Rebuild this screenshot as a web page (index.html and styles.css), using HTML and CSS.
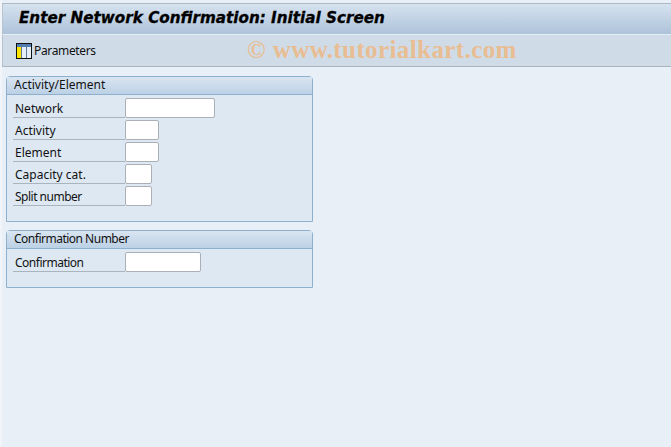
FILE: index.html
```html
<!DOCTYPE html>
<html lang="en">
<head>
<meta charset="UTF-8">
<title>Enter Network Confirmation: Initial Screen</title>
<link rel="stylesheet" href="styles.css">
</head>
<body>
<div class="window">
  <h1 class="title">Enter Network Confirmation: Initial Screen</h1>
  <div class="toolbar">
    <button class="tool" type="button">
      <svg class="tool-icon" width="16" height="16" viewBox="0 0 16 16">
        <rect x="0.5" y="0.5" width="15" height="15" fill="#fff" stroke="#111"/>
        <rect x="1" y="1" width="14" height="3" fill="#4f7fb5"/>
        <rect x="1" y="4" width="4" height="11" fill="#ffe600"/>
        <rect x="6" y="4" width="4" height="11" fill="#e6eff8"/>
        <rect x="11" y="4" width="4" height="11" fill="#e6eff8"/>
        <path d="M5.5 1v14M10.5 1v14" stroke="#5d7896"/>
      </svg>
      Parameters
    </button>
    <span class="watermark">&copy; www.tutorialkart.com</span>
  </div>
  <div class="content">
    <section class="group group-activity">
      <h2>Activity/Element</h2>
      <div class="rows">
        <div class="row"><label for="network">Network</label><input id="network" class="w-network" type="text"></div>
        <div class="row"><label for="activity">Activity</label><input id="activity" class="w-medium" type="text"></div>
        <div class="row"><label for="element">Element</label><input id="element" class="w-medium" type="text"></div>
        <div class="row"><label for="capacity">Capacity cat.</label><input id="capacity" class="w-small" type="text"></div>
        <div class="row"><label for="split" class="tight">Split number</label><input id="split" class="w-small" type="text"></div>
      </div>
    </section>
    <section class="group group-confirm">
      <h2 class="tight">Confirmation Number</h2>
      <div class="rows">
        <div class="row"><label for="confirmation" class="tight">Confirmation</label><input id="confirmation" class="w-confirm" type="text"></div>
      </div>
    </section>
  </div>
</div>
</body>
</html>
```

FILE: styles.css
```css
html, body { height: 100%; }
body {
  margin: 0;
  overflow: hidden;
  background: #f1f5f9;
  font-family: "Noto Sans", sans-serif;
  font-size: 12px;
  color: #111;
}
.window {
  height: 100%;
  box-sizing: border-box;
  margin-left: 2px;
  padding-top: 3px;
  background: #e8eff7;
}
.title {
  margin: 0;
  height: 31px;
  box-sizing: border-box;
  padding-left: 16px;
  border-top: 1px solid #aeb8c2;
  border-left: 1px solid #b7c3cf;
  background: linear-gradient(#d6e2ef, #adc3da);
  font: italic bold 15.2px/28px "DejaVu Sans", sans-serif;
  -webkit-text-stroke: 0.3px #000;
  color: #000;
}
.toolbar {
  position: relative;
  display: flex;
  align-items: center;
  height: 33px;
  box-sizing: border-box;
  padding-left: 13px;
  border-top: 1px solid #e6edf4;
  border-left: 1px solid #b7c3cf;
  border-bottom: 1px solid #a9b4bf;
  background: #cfdce8;
}
.tool {
  display: flex;
  align-items: center;
  gap: 2px;
  padding: 0;
  border: 0;
  background: none;
  font: 12px "Noto Sans", sans-serif;
  letter-spacing: -0.35px;
  color: #111;
}
.watermark {
  position: absolute;
  left: 244px;
  top: 1px;
  font: bold 25px "Liberation Serif", serif;
  letter-spacing: 0.4px;
  color: #e9bd92;
}
.content { padding: 9px 0 0 4px; }
.group {
  width: 307px;
  box-sizing: border-box;
  border: 1px solid #8eb0cf;
  border-radius: 4px 4px 0 0;
  background: #dde8f3;
}
.group-activity { height: 146px; margin-bottom: 8px; }
.group-confirm { height: 58px; }
.group h2 {
  margin: 0;
  height: 17px;
  padding-left: 7px;
  border-bottom: 1px solid #8eb0cf;
  background: linear-gradient(#d9e5f1, #bcd1e5);
  font: normal 12px/16px "Noto Sans", sans-serif;
  color: #111;
}
.rows {
  display: flex;
  flex-direction: column;
  gap: 2px;
  padding: 3px 0 0 6px;
}
.row {
  display: flex;
  align-items: flex-end;
  height: 20px;
}
.row label {
  width: 112px;
  height: 20px;
  box-sizing: border-box;
  padding: 2px 0 0 2px;
  border-bottom: 1px solid #aab4bd;
  font: 12px/18px "Noto Sans", sans-serif;
}
.group .tight { letter-spacing: -0.5px; }
.row input {
  height: 20px;
  box-sizing: border-box;
  padding: 0;
  margin: 0;
  border: 1px solid #aab0b6;
  border-radius: 2px;
  background: #fff;
}
.w-network { width: 90px; }
.w-medium { width: 34px; }
.w-small { width: 27px; }
.w-confirm { width: 76px; }
```
